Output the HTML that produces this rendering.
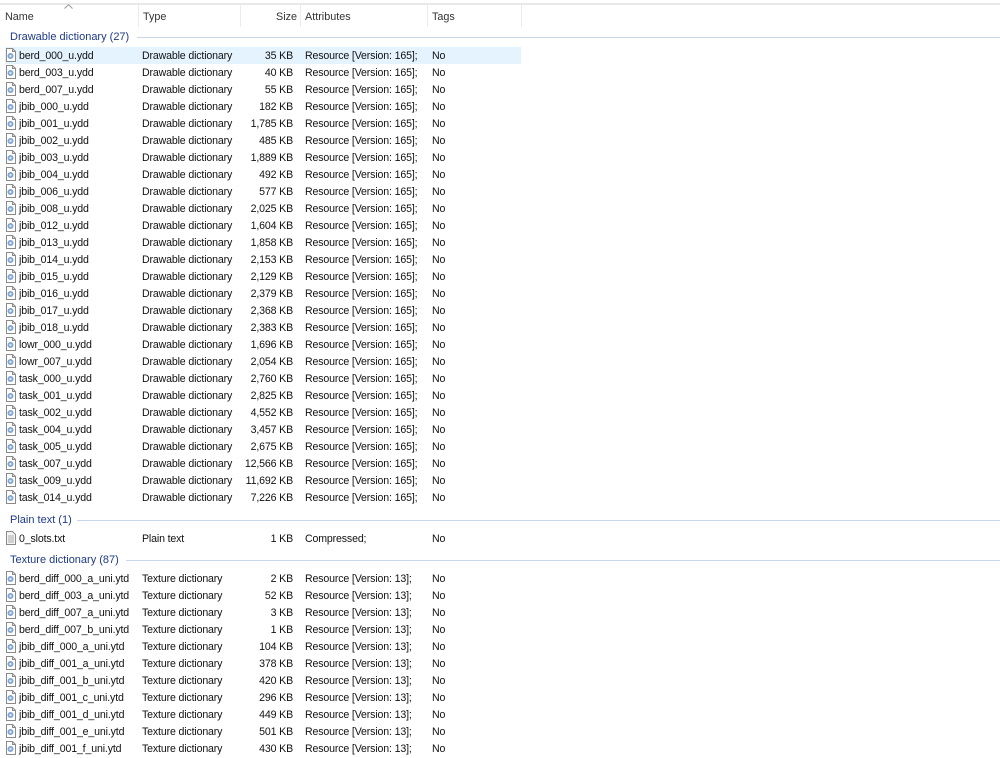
<!DOCTYPE html>
<html><head><meta charset="utf-8"><style>
body{margin:0;width:1000px;height:756px;background:#fff;font-family:"Liberation Sans",sans-serif;font-size:10.6px;color:#111;position:relative;overflow:hidden}
.top{position:absolute;left:0;top:3px;width:1000px;height:2px;background:#e8e8e8}
.h{position:absolute;top:11px;color:#333;font-size:10.8px}
.sep{position:absolute;top:5px;width:1px;height:22px;background:#ececec}
.g{position:absolute;left:10px;color:#1e3a8a;font-size:11px;background:#fff;padding-right:5px;line-height:14px}
.gl{position:absolute;height:1px;background:#c9d6ea;right:0}
.r{position:absolute;left:0;width:1000px;height:17px;line-height:17px;letter-spacing:-0.15px}
.r span{position:absolute;top:1px;white-space:nowrap}
.n{left:19px}.t{left:142px}.s{right:707px;text-align:right}.a{left:305px}.k{left:432px}
.ic{position:absolute;left:5px;top:1px;width:12px;height:14px}
.sel{background:#e5f3ff;width:516px;left:5px}
</style></head><body>
<div class="top"></div>
<div class="h" style="left:5px">Name</div>
<svg style="position:absolute;left:64px;top:4px" width="9" height="5"><path d="M.5 4.5L4.5 .8L8.5 4.5" fill="none" stroke="#999"/></svg>
<div class="h" style="left:143px">Type</div>
<div class="h" style="left:276px">Size</div>
<div class="h" style="left:305px">Attributes</div>
<div class="h" style="left:432px">Tags</div>
<div class="sep" style="left:138px"></div><div class="sep" style="left:240px"></div><div class="sep" style="left:300px"></div><div class="sep" style="left:427px"></div><div class="sep" style="left:521px"></div>
<svg width="0" height="0" style="position:absolute"><defs><symbol id="f" viewBox="0 0 12 14"><path d="M1.5 .5h6l3 3v10h-9z" fill="#fff" stroke="#8a8a8a"/><path d="M7.5 .5v3h3" fill="none" stroke="#8a8a8a"/><circle cx="5.5" cy="8" r="3" fill="#7fa6cf"/><circle cx="5.5" cy="8" r="1.2" fill="#dfe9f5"/></symbol>
<symbol id="p" viewBox="0 0 12 14"><path d="M1.5 .5h6l3 3v10h-9z" fill="#f4f4f4" stroke="#8a8a8a"/><path d="M3 5h6M3 7h6M3 9h6M3 11h6" stroke="#aaa"/></symbol></defs></svg>

<div class="gl" style="left:137px;top:37px"></div><div class="g" style="top:30px">Drawable dictionary (27)</div>
<div class="r sel" style="top:47px;left:5px;width:516px"></div>
<div class="r" style="top:47px"><svg class="ic"><use href="#f"/></svg><span class="n">berd_000_u.ydd</span><span class="t">Drawable dictionary</span><span class="s">35 KB</span><span class="a">Resource [Version: 165];</span><span class="k">No</span></div>
<div class="r" style="top:64px"><svg class="ic"><use href="#f"/></svg><span class="n">berd_003_u.ydd</span><span class="t">Drawable dictionary</span><span class="s">40 KB</span><span class="a">Resource [Version: 165];</span><span class="k">No</span></div>
<div class="r" style="top:81px"><svg class="ic"><use href="#f"/></svg><span class="n">berd_007_u.ydd</span><span class="t">Drawable dictionary</span><span class="s">55 KB</span><span class="a">Resource [Version: 165];</span><span class="k">No</span></div>
<div class="r" style="top:98px"><svg class="ic"><use href="#f"/></svg><span class="n">jbib_000_u.ydd</span><span class="t">Drawable dictionary</span><span class="s">182 KB</span><span class="a">Resource [Version: 165];</span><span class="k">No</span></div>
<div class="r" style="top:115px"><svg class="ic"><use href="#f"/></svg><span class="n">jbib_001_u.ydd</span><span class="t">Drawable dictionary</span><span class="s">1,785 KB</span><span class="a">Resource [Version: 165];</span><span class="k">No</span></div>
<div class="r" style="top:132px"><svg class="ic"><use href="#f"/></svg><span class="n">jbib_002_u.ydd</span><span class="t">Drawable dictionary</span><span class="s">485 KB</span><span class="a">Resource [Version: 165];</span><span class="k">No</span></div>
<div class="r" style="top:149px"><svg class="ic"><use href="#f"/></svg><span class="n">jbib_003_u.ydd</span><span class="t">Drawable dictionary</span><span class="s">1,889 KB</span><span class="a">Resource [Version: 165];</span><span class="k">No</span></div>
<div class="r" style="top:166px"><svg class="ic"><use href="#f"/></svg><span class="n">jbib_004_u.ydd</span><span class="t">Drawable dictionary</span><span class="s">492 KB</span><span class="a">Resource [Version: 165];</span><span class="k">No</span></div>
<div class="r" style="top:183px"><svg class="ic"><use href="#f"/></svg><span class="n">jbib_006_u.ydd</span><span class="t">Drawable dictionary</span><span class="s">577 KB</span><span class="a">Resource [Version: 165];</span><span class="k">No</span></div>
<div class="r" style="top:200px"><svg class="ic"><use href="#f"/></svg><span class="n">jbib_008_u.ydd</span><span class="t">Drawable dictionary</span><span class="s">2,025 KB</span><span class="a">Resource [Version: 165];</span><span class="k">No</span></div>
<div class="r" style="top:217px"><svg class="ic"><use href="#f"/></svg><span class="n">jbib_012_u.ydd</span><span class="t">Drawable dictionary</span><span class="s">1,604 KB</span><span class="a">Resource [Version: 165];</span><span class="k">No</span></div>
<div class="r" style="top:234px"><svg class="ic"><use href="#f"/></svg><span class="n">jbib_013_u.ydd</span><span class="t">Drawable dictionary</span><span class="s">1,858 KB</span><span class="a">Resource [Version: 165];</span><span class="k">No</span></div>
<div class="r" style="top:251px"><svg class="ic"><use href="#f"/></svg><span class="n">jbib_014_u.ydd</span><span class="t">Drawable dictionary</span><span class="s">2,153 KB</span><span class="a">Resource [Version: 165];</span><span class="k">No</span></div>
<div class="r" style="top:268px"><svg class="ic"><use href="#f"/></svg><span class="n">jbib_015_u.ydd</span><span class="t">Drawable dictionary</span><span class="s">2,129 KB</span><span class="a">Resource [Version: 165];</span><span class="k">No</span></div>
<div class="r" style="top:285px"><svg class="ic"><use href="#f"/></svg><span class="n">jbib_016_u.ydd</span><span class="t">Drawable dictionary</span><span class="s">2,379 KB</span><span class="a">Resource [Version: 165];</span><span class="k">No</span></div>
<div class="r" style="top:302px"><svg class="ic"><use href="#f"/></svg><span class="n">jbib_017_u.ydd</span><span class="t">Drawable dictionary</span><span class="s">2,368 KB</span><span class="a">Resource [Version: 165];</span><span class="k">No</span></div>
<div class="r" style="top:319px"><svg class="ic"><use href="#f"/></svg><span class="n">jbib_018_u.ydd</span><span class="t">Drawable dictionary</span><span class="s">2,383 KB</span><span class="a">Resource [Version: 165];</span><span class="k">No</span></div>
<div class="r" style="top:336px"><svg class="ic"><use href="#f"/></svg><span class="n">lowr_000_u.ydd</span><span class="t">Drawable dictionary</span><span class="s">1,696 KB</span><span class="a">Resource [Version: 165];</span><span class="k">No</span></div>
<div class="r" style="top:353px"><svg class="ic"><use href="#f"/></svg><span class="n">lowr_007_u.ydd</span><span class="t">Drawable dictionary</span><span class="s">2,054 KB</span><span class="a">Resource [Version: 165];</span><span class="k">No</span></div>
<div class="r" style="top:370px"><svg class="ic"><use href="#f"/></svg><span class="n">task_000_u.ydd</span><span class="t">Drawable dictionary</span><span class="s">2,760 KB</span><span class="a">Resource [Version: 165];</span><span class="k">No</span></div>
<div class="r" style="top:387px"><svg class="ic"><use href="#f"/></svg><span class="n">task_001_u.ydd</span><span class="t">Drawable dictionary</span><span class="s">2,825 KB</span><span class="a">Resource [Version: 165];</span><span class="k">No</span></div>
<div class="r" style="top:404px"><svg class="ic"><use href="#f"/></svg><span class="n">task_002_u.ydd</span><span class="t">Drawable dictionary</span><span class="s">4,552 KB</span><span class="a">Resource [Version: 165];</span><span class="k">No</span></div>
<div class="r" style="top:421px"><svg class="ic"><use href="#f"/></svg><span class="n">task_004_u.ydd</span><span class="t">Drawable dictionary</span><span class="s">3,457 KB</span><span class="a">Resource [Version: 165];</span><span class="k">No</span></div>
<div class="r" style="top:438px"><svg class="ic"><use href="#f"/></svg><span class="n">task_005_u.ydd</span><span class="t">Drawable dictionary</span><span class="s">2,675 KB</span><span class="a">Resource [Version: 165];</span><span class="k">No</span></div>
<div class="r" style="top:455px"><svg class="ic"><use href="#f"/></svg><span class="n">task_007_u.ydd</span><span class="t">Drawable dictionary</span><span class="s">12,566 KB</span><span class="a">Resource [Version: 165];</span><span class="k">No</span></div>
<div class="r" style="top:472px"><svg class="ic"><use href="#f"/></svg><span class="n">task_009_u.ydd</span><span class="t">Drawable dictionary</span><span class="s">11,692 KB</span><span class="a">Resource [Version: 165];</span><span class="k">No</span></div>
<div class="r" style="top:489px"><svg class="ic"><use href="#f"/></svg><span class="n">task_014_u.ydd</span><span class="t">Drawable dictionary</span><span class="s">7,226 KB</span><span class="a">Resource [Version: 165];</span><span class="k">No</span></div>

<div class="gl" style="left:76px;top:520px"></div><div class="g" style="top:513px">Plain text (1)</div>
<div class="r" style="top:529px;height:18px;line-height:18px"><svg class="ic" style="top:2px"><use href="#p"/></svg><span class="n">0_slots.txt</span><span class="t">Plain text</span><span class="s">1 KB</span><span class="a">Compressed;</span><span class="k">No</span></div>

<div class="gl" style="left:126px;top:560px"></div><div class="g" style="top:553px">Texture dictionary (87)</div>
<div class="r" style="top:570px"><svg class="ic"><use href="#f"/></svg><span class="n">berd_diff_000_a_uni.ytd</span><span class="t">Texture dictionary</span><span class="s">2 KB</span><span class="a">Resource [Version: 13];</span><span class="k">No</span></div>
<div class="r" style="top:587px"><svg class="ic"><use href="#f"/></svg><span class="n">berd_diff_003_a_uni.ytd</span><span class="t">Texture dictionary</span><span class="s">52 KB</span><span class="a">Resource [Version: 13];</span><span class="k">No</span></div>
<div class="r" style="top:604px"><svg class="ic"><use href="#f"/></svg><span class="n">berd_diff_007_a_uni.ytd</span><span class="t">Texture dictionary</span><span class="s">3 KB</span><span class="a">Resource [Version: 13];</span><span class="k">No</span></div>
<div class="r" style="top:621px"><svg class="ic"><use href="#f"/></svg><span class="n">berd_diff_007_b_uni.ytd</span><span class="t">Texture dictionary</span><span class="s">1 KB</span><span class="a">Resource [Version: 13];</span><span class="k">No</span></div>
<div class="r" style="top:638px"><svg class="ic"><use href="#f"/></svg><span class="n">jbib_diff_000_a_uni.ytd</span><span class="t">Texture dictionary</span><span class="s">104 KB</span><span class="a">Resource [Version: 13];</span><span class="k">No</span></div>
<div class="r" style="top:655px"><svg class="ic"><use href="#f"/></svg><span class="n">jbib_diff_001_a_uni.ytd</span><span class="t">Texture dictionary</span><span class="s">378 KB</span><span class="a">Resource [Version: 13];</span><span class="k">No</span></div>
<div class="r" style="top:672px"><svg class="ic"><use href="#f"/></svg><span class="n">jbib_diff_001_b_uni.ytd</span><span class="t">Texture dictionary</span><span class="s">420 KB</span><span class="a">Resource [Version: 13];</span><span class="k">No</span></div>
<div class="r" style="top:689px"><svg class="ic"><use href="#f"/></svg><span class="n">jbib_diff_001_c_uni.ytd</span><span class="t">Texture dictionary</span><span class="s">296 KB</span><span class="a">Resource [Version: 13];</span><span class="k">No</span></div>
<div class="r" style="top:706px"><svg class="ic"><use href="#f"/></svg><span class="n">jbib_diff_001_d_uni.ytd</span><span class="t">Texture dictionary</span><span class="s">449 KB</span><span class="a">Resource [Version: 13];</span><span class="k">No</span></div>
<div class="r" style="top:723px"><svg class="ic"><use href="#f"/></svg><span class="n">jbib_diff_001_e_uni.ytd</span><span class="t">Texture dictionary</span><span class="s">501 KB</span><span class="a">Resource [Version: 13];</span><span class="k">No</span></div>
<div class="r" style="top:740px"><svg class="ic"><use href="#f"/></svg><span class="n">jbib_diff_001_f_uni.ytd</span><span class="t">Texture dictionary</span><span class="s">430 KB</span><span class="a">Resource [Version: 13];</span><span class="k">No</span></div>
</body></html>
